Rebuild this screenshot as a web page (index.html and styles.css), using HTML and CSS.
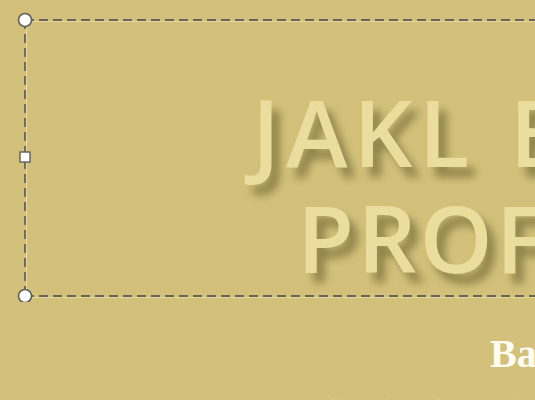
FILE: index.html
```html
<!DOCTYPE html>
<html lang="en">
<head>
    <meta charset="UTF-8">
    <meta name="viewport" content="width=device-width, initial-scale=1.0">
    <title>Banner editor</title>
    <link rel="stylesheet" href="styles.css">
</head>
<body>
    <div class="canvas">
        <!-- Selected title box -->
        <div class="frame">
            <svg class="selection" width="560" height="290" viewBox="-8 -8 560 290">
                <path d="M0 0 H552 M0 0 V276 M0 276 H552" fill="none" stroke="#f3e6b4" stroke-width="1" transform="translate(1.5 1.5)" opacity="0.6"/>
                <path d="M0 0 H552 M0 0 V276 M0 276 H552" fill="none" stroke="#66645e" stroke-width="1.8" stroke-dasharray="9 5"/>
                <circle cx="0" cy="0" r="6.5" fill="#fff" stroke="#5f6058" stroke-width="1.6"/>
                <circle cx="0" cy="276" r="6.5" fill="#fff" stroke="#5f6058" stroke-width="1.6"/>
                <rect x="-5" y="132" width="10" height="10" fill="#fff" stroke="#5f6058" stroke-width="1.4"/>
            </svg>
            <h1 class="title">
                <span class="line line-1">JAKL BEAUTY</span>
                <span class="line line-2">PROFESSIONAL</span>
            </h1>
        </div>

        <p class="subtitle">Bath &amp; Body</p>
        <p class="tagline">Natural care for every day</p>
    </div>
</body>
</html>
```

FILE: styles.css
```css
body {
    margin: 0;
    padding: 0;
    background-color: #d3c17b;
    overflow: hidden;
}

.canvas {
    width: 535px;
    height: 400px;
    overflow: hidden;
}

.frame {
    position: relative;
    margin: 20px 0 0 25px;
    width: 600px;
    height: 276px;
    box-sizing: border-box;
    padding-top: 58px;
}

.selection {
    position: absolute;
    left: -8px;
    top: -8px;
    z-index: 2;
}

.title {
    margin: 0;
    font-family: "Open Sans", sans-serif;
    font-weight: 600;
    font-size: 93px;
    line-height: 106px;
    letter-spacing: 3px;
    color: #ebdd9d;
    text-shadow: 8px 10px 9px rgba(96, 86, 38, 0.6);
    white-space: nowrap;
}

.line {
    display: block;
}

.line-1 {
    margin-left: 227px;
    letter-spacing: 6px;
    word-spacing: 4px;
}

.line-2 {
    margin-left: 272px;
}

.subtitle {
    margin: 38px 0 0 490px;
    font-family: "Liberation Serif", serif;
    font-weight: bold;
    font-size: 40px;
    line-height: 40px;
    color: #fffdf2;
    white-space: nowrap;
}

.tagline {
    margin: 22px 0 0 330px;
    font-family: "Liberation Serif", serif;
    font-size: 20px;
    line-height: 20px;
    color: #dccb88;
    white-space: nowrap;
}
```
